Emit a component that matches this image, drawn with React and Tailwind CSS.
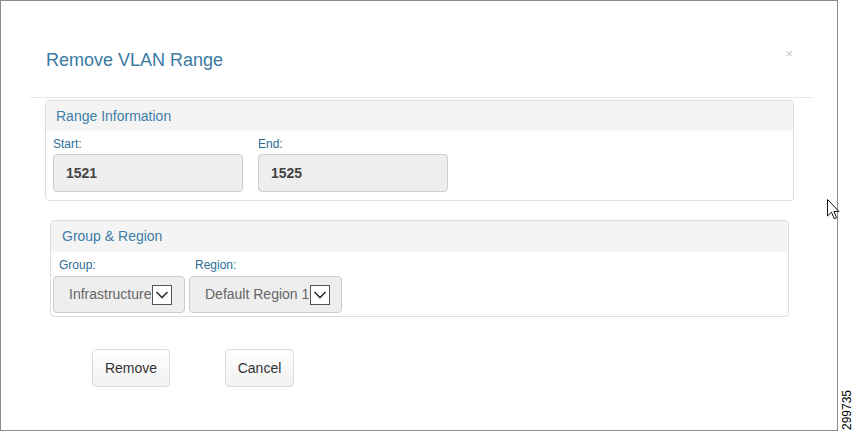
import React from 'react';

const Chevron = () => (
  <span className="flex h-[20px] w-[20px] items-center justify-center border border-[#555555] bg-white ml-[1px]">
    <svg width="14" height="10" viewBox="0 0 14 10">
      <polyline points="1.5,2 7,7.5 12.5,2" fill="none" stroke="#333333" strokeWidth="1.6" />
    </svg>
  </span>
);

const Field = ({ label, value }) => (
  <div className="flex w-[190px] flex-col">
    <span className="h-[23px] leading-[26px] text-[12px] text-[#2c6d96]">{label}</span>
    <div className="flex h-[38px] items-center rounded-[4px] border border-[#cccccc] bg-[#eeeeee] pl-[12px] text-[14px] font-bold text-[#444444]">
      {value}
    </div>
  </div>
);

const SelectField = ({ label, value, width }) => (
  <div className="flex flex-col">
    <span className="h-[24px] pl-[6px] leading-[27px] text-[12px] text-[#2c6d96]">{label}</span>
    <div
      className={`flex h-[37px] items-center rounded-[4px] border border-[#cccccc] bg-[#eeeeee] pl-[15px] text-[14px] text-[#666666] ${width}`}
    >
      <span>{value}</span>
      <Chevron />
    </div>
  </div>
);

const Button = ({ children, width }) => (
  <button
    className={`flex h-[38px] items-center justify-center rounded-[4px] border border-[#dcdcdc] bg-linear-to-b from-white to-[#f1f1f1] text-[14px] text-[#333333] ${width}`}
  >
    {children}
  </button>
);

export default function App() {
  return (
    <div className="relative h-[432px] w-[853px] overflow-hidden bg-white font-['Liberation_Sans',Arial,sans-serif]">
      <div className="h-[431px] w-[838px] border border-[#8c8c8c] bg-white">
        {/* Header */}
        <div className="flex h-[96px] items-start justify-between pl-[45px] pr-[44px] pt-[47px]">
          <h1 className="h-[24px] leading-[24px] text-[18px] text-[#3a7aa4]">Remove VLAN Range</h1>
          <span className="mt-[-1px] leading-[13px] text-[13px] text-[#c8c8c8]">×</span>
        </div>
        <div className="ml-[29px] h-px w-[782px] bg-[#e6e6e6]" />

        {/* Range Information */}
        <div className="ml-[44px] mt-[2px] h-[101px] w-[749px] overflow-hidden rounded-[4px] border border-[#dddddd]">
          <div className="flex h-[30px] items-center bg-[#f4f4f4] pl-[10px] text-[14px] text-[#3d7ea8]">
            Range Information
          </div>
          <div className="flex gap-[15px] pl-[7px]">
            <Field label="Start:" value="1521" />
            <Field label="End:" value="1525" />
          </div>
        </div>

        {/* Group & Region */}
        <div className="ml-[49px] mt-[19px] h-[97px] w-[739px] overflow-hidden rounded-[4px] border border-[#dddddd]">
          <div className="flex h-[31px] items-center bg-[#f4f4f4] pl-[11px] text-[14px] text-[#3d7ea8]">
            Group &amp; Region
          </div>
          <div className="flex gap-[4px] pl-[2px]">
            <SelectField label="Group:" value="Infrastructure" width="w-[132px]" />
            <SelectField label="Region:" value="Default Region 1" width="w-[153px]" />
          </div>
        </div>

        {/* Actions */}
        <div className="ml-[91px] mt-[32px] flex gap-[55px]">
          <Button width="w-[78px]">Remove</Button>
          <Button width="w-[69px]">Cancel</Button>
        </div>
      </div>

      {/* mouse pointer */}
      <svg className="absolute left-[827px] top-[199px]" width="13" height="22" viewBox="0 0 13 22">
        <path
          d="M0.5 0.5 L0.5 17 L4.5 13.2 L7.3 19.8 L9.6 18.8 L6.9 12.4 L12 12.4 Z"
          fill="white"
          stroke="#111111"
          strokeWidth="1"
          strokeLinejoin="miter"
        />
      </svg>

      <span className="absolute left-[841px] top-[390px] rotate-180 text-[12px] leading-[12px] text-black [writing-mode:vertical-rl]">
        299735
      </span>
    </div>
  );
}
